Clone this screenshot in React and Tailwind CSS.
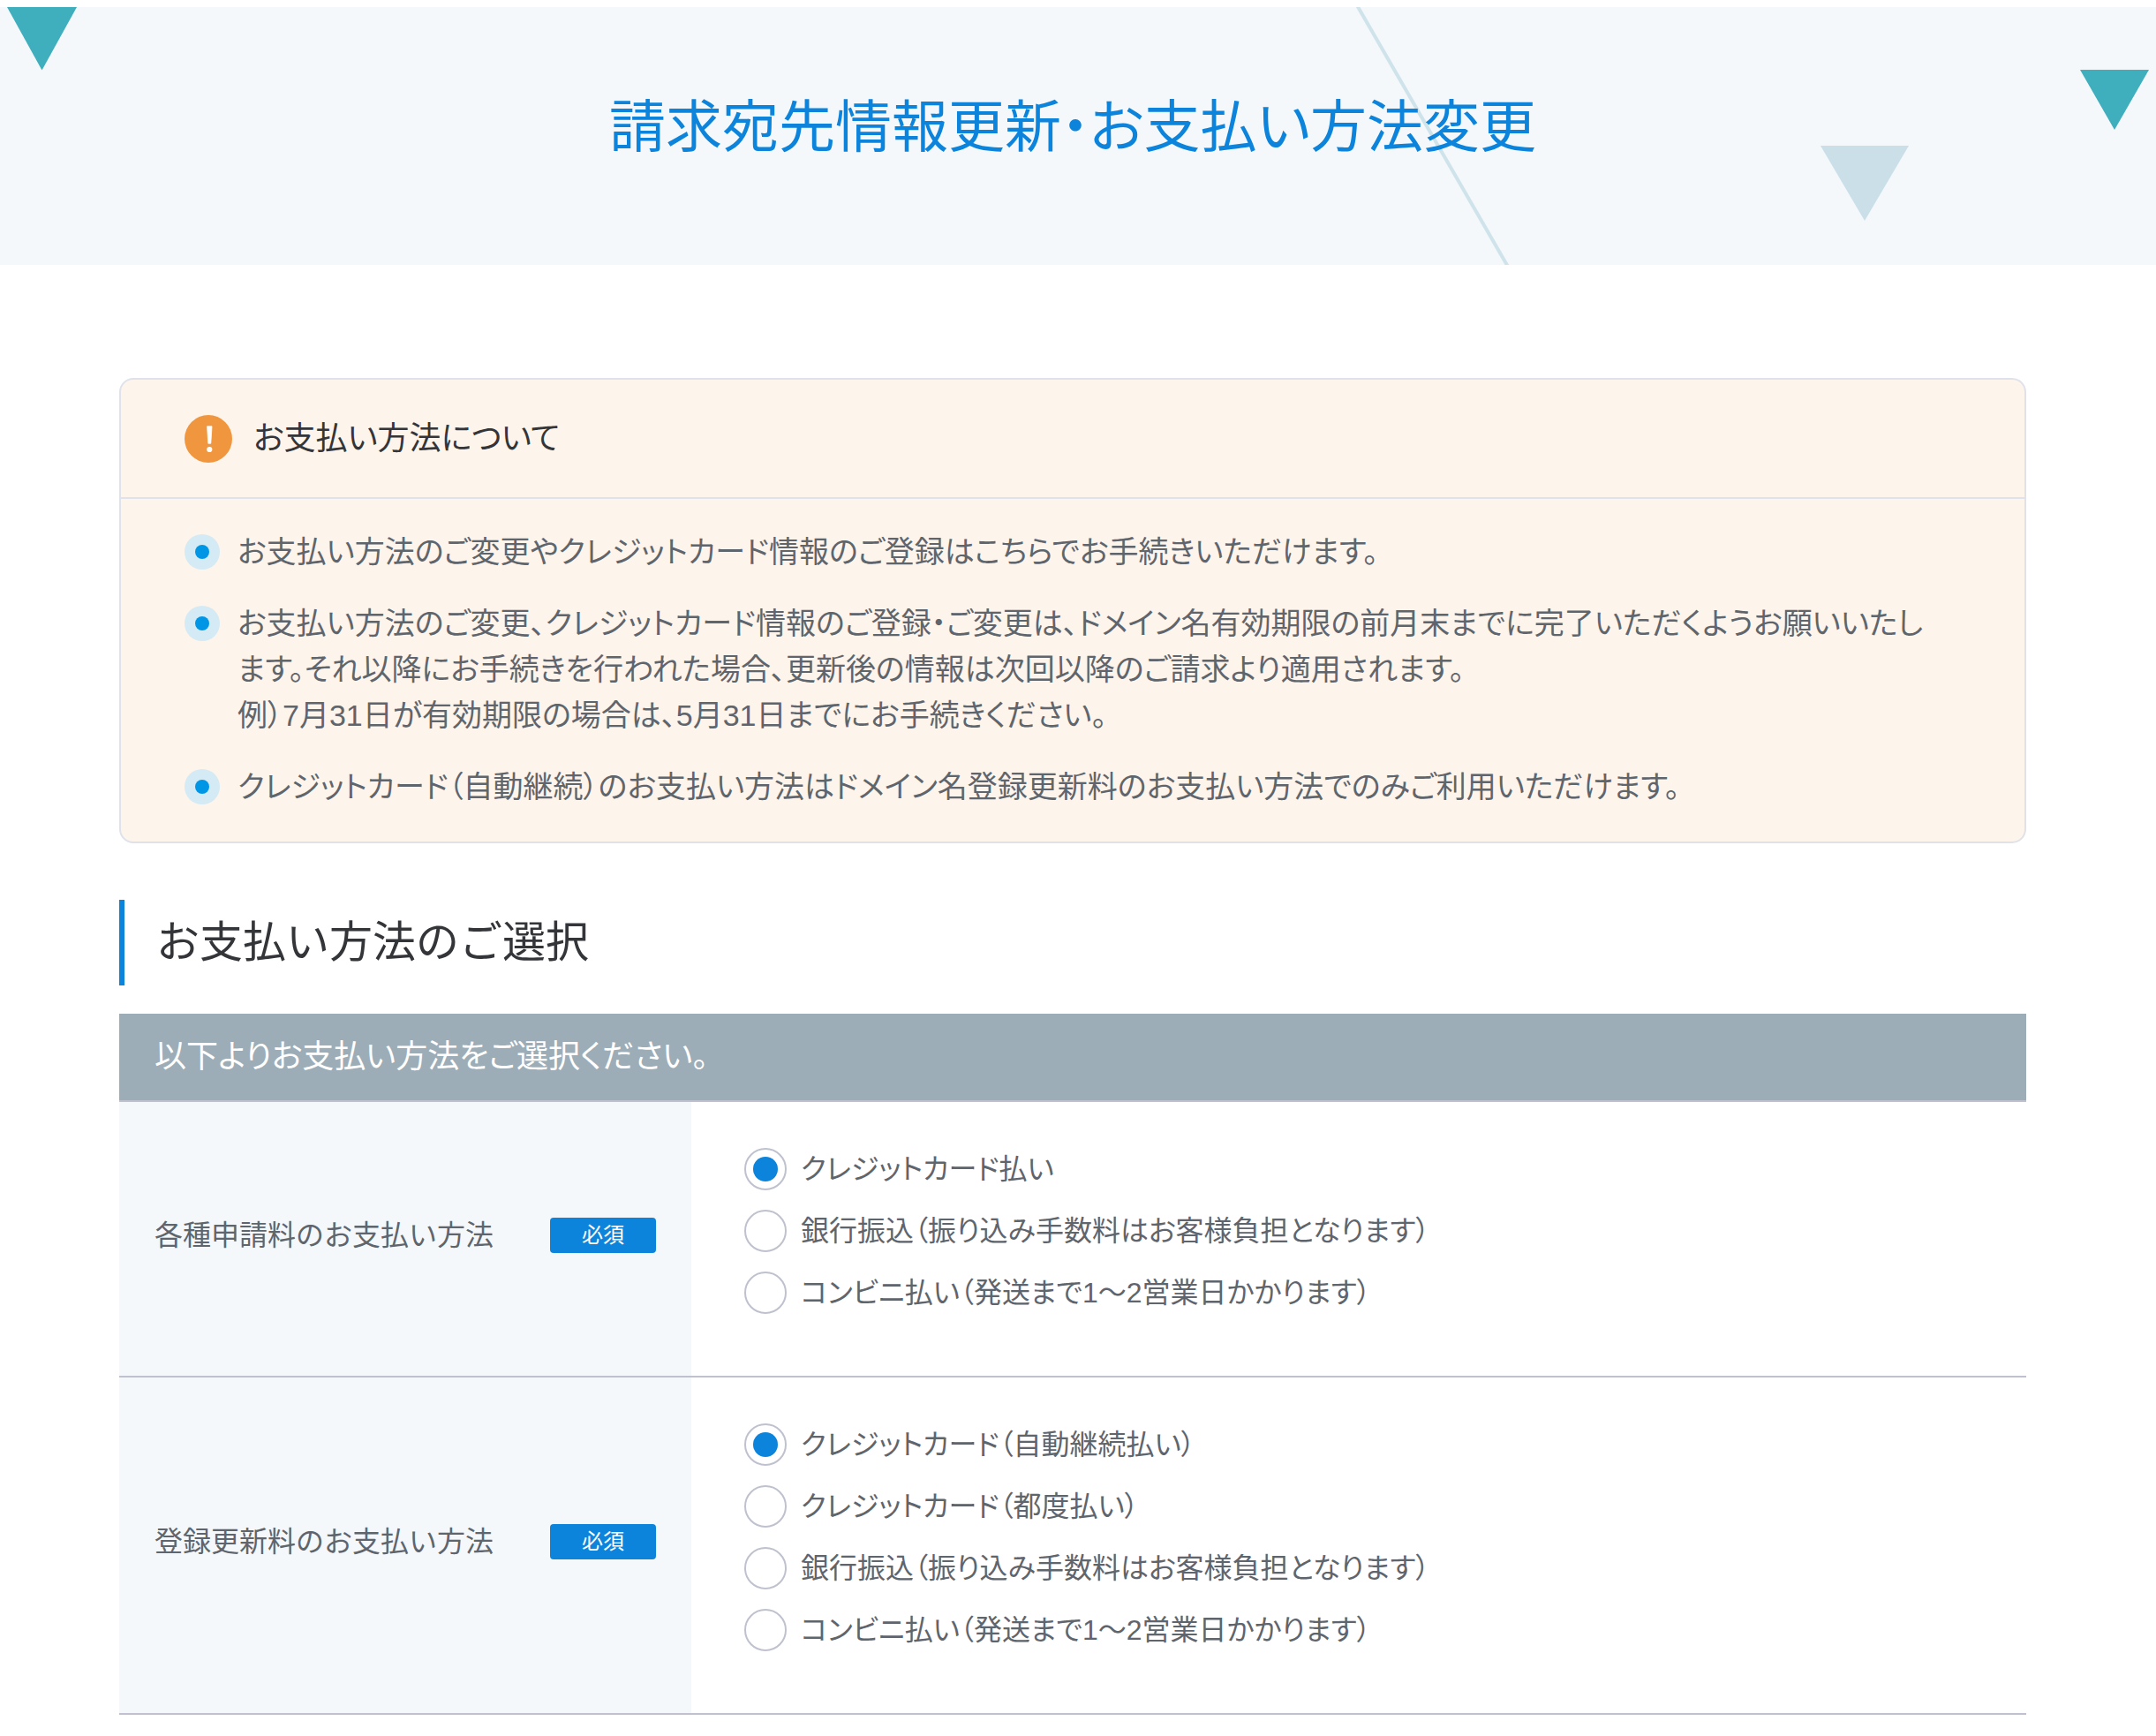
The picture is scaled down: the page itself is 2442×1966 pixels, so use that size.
import { useState } from "react";

const notices = [
  ["お支払い方法のご変更やクレジットカード情報のご登録はこちらでお手続きいただけます。"],
  [
    "お支払い方法のご変更、クレジットカード情報のご登録・ご変更は、ドメイン名有効期限の前月末までに完了いただくようお願いいたします。それ以降にお手続きを行われた場合、更新後の情報は次回以降のご請求より適用されます。",
    "例）7月31日が有効期限の場合は、5月31日までにお手続きください。",
  ],
  ["クレジットカード（自動継続）のお支払い方法はドメイン名登録更新料のお支払い方法でのみご利用いただけます。"],
];

const fields = [
  {
    name: "application",
    label: "各種申請料のお支払い方法",
    options: [
      "クレジットカード払い",
      "銀行振込（振り込み手数料はお客様負担となります）",
      "コンビニ払い（発送まで1〜2営業日かかります）",
    ],
  },
  {
    name: "renewal",
    label: "登録更新料のお支払い方法",
    options: [
      "クレジットカード（自動継続払い）",
      "クレジットカード（都度払い）",
      "銀行振込（振り込み手数料はお客様負担となります）",
      "コンビニ払い（発送まで1〜2営業日かかります）",
    ],
  },
];

function Banner() {
  return (
    <header className="relative mt-2 overflow-hidden bg-[#f4f8fb] pt-[88px] pr-3 pb-[108px]">
      <svg
        className="absolute inset-0 h-full w-full"
        viewBox="0 0 2442 292"
        preserveAspectRatio="xMidYMin slice"
        aria-hidden="true"
      >
        <path d="M8 0H87L47.5 71.5Z" fill="#3faebd" />
        <path d="M2356 71H2434L2395 139Z" fill="#3faebd" />
        <path d="M2062 157H2162L2112 242Z" fill="#cbdfe9" />
        <path d="M1537 -2L1708 294" stroke="#cfe3ea" strokeWidth="4" />
      </svg>
      <h1 className="relative text-center text-[64px] leading-[96px] text-[#0c84dc] [font-feature-settings:'palt']">
        請求宛先情報更新・お支払い方法変更
      </h1>
    </header>
  );
}

function Notice() {
  return (
    <section className="rounded-2xl border-2 border-[#dfe2ea] bg-[#fdf4eb]">
      <div className="flex items-center gap-6 border-b-2 border-[#dfe2ea] px-[72px] pt-10 pb-[39px]">
        <svg className="size-[54px]" viewBox="0 0 54 54" aria-hidden="true">
          <circle cx="27" cy="27" r="27" fill="#f0963f" />
          <path
            d="M25.6 12.8h5.4l-1.2 19.4h-3z"
            fill="#fff"
            stroke="#fff"
            strokeWidth="0.8"
            strokeLinejoin="round"
          />
          <circle cx="28.3" cy="39" r="3.1" fill="#fff" />
        </svg>
        <h2 className="text-4xl text-[#333539] [font-feature-settings:'palt']">
          お支払い方法について
        </h2>
      </div>
      <ul className="flex flex-col gap-[29px] pt-[34px] pr-[84px] pb-9 pl-[72px] text-[34px] leading-[52px] [font-feature-settings:'palt']">
        {notices.map((lines) => (
          <li key={lines[0]} className="flex gap-5">
            <span className="mt-1.5 flex size-10 shrink-0 items-center justify-center rounded-full bg-[#d4eaf4]">
              <span className="size-4 rounded-full bg-[#0096e6]" />
            </span>
            <div>
              {lines.map((line) => (
                <p key={line}>{line}</p>
              ))}
            </div>
          </li>
        ))}
      </ul>
    </section>
  );
}

function FieldRow({ field }) {
  const [selected, setSelected] = useState(0);

  return (
    <tr className="border-b-2 border-[#bfc2ce]">
      <th scope="row" className="bg-[#f4f8fb] px-10 pb-2 text-left font-normal">
        <div className="flex items-center justify-between">
          <span>{field.label}</span>
          <span className="w-[120px] rounded bg-[#0c84dc] text-center text-2xl leading-10 text-white">
            必須
          </span>
        </div>
      </th>
      <td className="px-[60px] pt-[52px] pb-[70px]">
        <div
          role="radiogroup"
          aria-label={field.label}
          className="flex flex-col gap-[22px] [font-feature-settings:'palt']"
        >
          {field.options.map((option, i) => (
            <label key={option} className="flex items-center gap-4 leading-[48px]">
              <input
                type="radio"
                name={field.name}
                checked={selected === i}
                onChange={() => setSelected(i)}
                className="grid size-12 appearance-none place-content-center rounded-full border-2 border-[#bfc2ce] bg-white before:size-7 before:rounded-full checked:before:bg-[#0c84dc]"
              />
              {option}
            </label>
          ))}
        </div>
      </td>
    </tr>
  );
}

export default function App() {
  return (
    <div
      lang="ja"
      className="flow-root bg-white font-['Liberation_Sans','Noto_Sans_CJK_JP',sans-serif] text-[#5f656c]"
    >
      <Banner />
      <div className="pt-32 pr-3 pb-6">
        <main className="mx-auto w-full max-w-[2160px]">
          <Notice />
          <h2 className="mt-16 border-l-[6px] border-[#0c84dc] pl-9 text-[49px] leading-[97px] text-[#333539]">
            お支払い方法のご選択
          </h2>
          <table className="mt-8 w-full table-fixed border-collapse text-[32px] leading-[48px]">
            <colgroup>
              <col className="w-[30%]" />
              <col />
            </colgroup>
            <thead>
              <tr className="border-b-2 border-[#bfc2ce] bg-[#9cadb8]">
                <th
                  colSpan={2}
                  className="px-10 py-6 text-left text-4xl leading-[50px] font-normal text-white [font-feature-settings:'palt']"
                >
                  以下よりお支払い方法をご選択ください。
                </th>
              </tr>
            </thead>
            <tbody>
              {fields.map((field) => (
                <FieldRow key={field.name} field={field} />
              ))}
            </tbody>
          </table>
        </main>
      </div>
    </div>
  );
}
